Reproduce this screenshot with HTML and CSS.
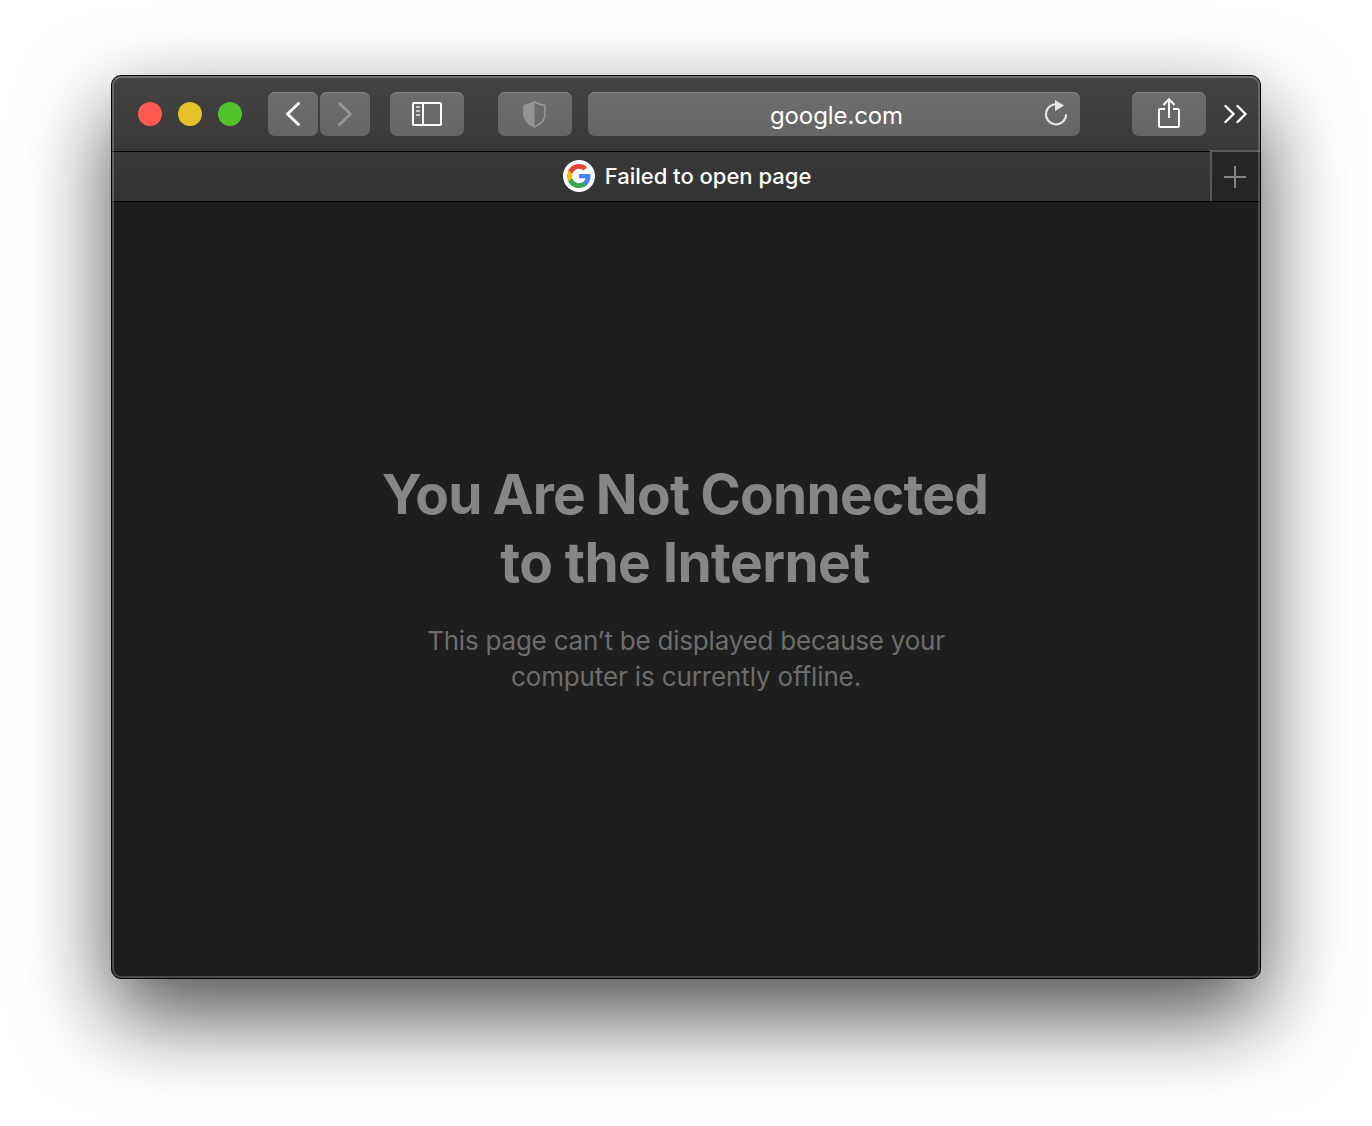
FILE: index.html
```html
<!DOCTYPE html>
<html lang="en">
<head>
<meta charset="utf-8">
<title>Failed to open page</title>
<link rel="stylesheet" href="styles.css">
</head>
<body>
<main class="window">
  <header class="toolbar">
    <div class="lights"><span class="light close"></span><span class="light minimize"></span><span class="light maximize"></span></div>
    <div class="nav">
      <button class="btn narrow" aria-label="Back"><svg width="50" height="44" viewBox="0 0 50 44"><path d="M30.500 11.500 19.500 22 30.500 32.500" fill="none" stroke="#fff" stroke-width="2.900" stroke-linecap="round" stroke-linejoin="round"/></svg></button>
      <button class="btn narrow" aria-label="Forward"><svg width="50" height="44" viewBox="0 0 50 44"><path d="M19.500 11.500 30.500 22 19.500 32.500" fill="none" stroke="#979797" stroke-width="2.700" stroke-linecap="round" stroke-linejoin="round"/></svg></button>
    </div>
    <button class="btn sidebar" aria-label="Sidebar"><svg width="74" height="44" viewBox="0 0 74 44"><rect x="23" y="11" width="28" height="22" rx="1" fill="none" stroke="#fff" stroke-width="2"/><path d="M33 11V33" stroke="#fff" stroke-width="2"/><path d="M26 15H30M26 19H30M26 23H30" stroke="#c8c8c8" stroke-width="2"/></svg></button>
    <button class="btn shield" aria-label="Privacy report"><svg width="74" height="44" viewBox="0 0 74 44"><path d="M36.500 9.700C33.500 11.700 29.500 12.900 26 13.600V22.500C26 28.500 31 32.500 36.500 35 42 32.500 47 28.500 47 22.500V13.600C43.500 12.900 39.500 11.700 36.500 9.700Z" fill="none" stroke="#949494" stroke-width="1.700" stroke-linejoin="round"/><path d="M36.500 9.700C33.500 11.700 29.500 12.900 26 13.600V22.500C26 28.500 31 32.500 36.500 35Z" fill="#949494"/></svg></button>
    <div class="address"><span class="url">google.com</span><svg class="reload" width="32" height="44" viewBox="0 0 32 44"><path d="M18.500 12.500A10.100 10.100 0 1 0 26.100 22.300" fill="none" stroke="#e6e6e6" stroke-width="2"/><path d="M15 8V19.200L24 13.500Z" fill="#e6e6e6"/></svg></div>
    <button class="btn share" aria-label="Share"><svg width="74" height="44" viewBox="0 0 74 44"><path d="M33 17H28Q27 17 27 18V34Q27 35 28 35H46Q47 35 47 34V18Q47 17 46 17H41M37 26V8M31.500 13 37 7.200 42.500 13" fill="none" stroke="#fff" stroke-width="1.900"/></svg></button>
    <svg class="more" width="24" height="20" viewBox="0 0 24 20"><path d="M1.500 2 9.500 10 1.500 18M13.500 2 21.500 10 13.500 18" fill="none" stroke="#fff" stroke-width="2.300" stroke-linecap="round" stroke-linejoin="miter"/></svg>
  </header>
  <nav class="tabs">
    <div class="tab">
      <svg class="favicon" width="32" height="32" viewBox="0 0 32 32"><circle cx="16" cy="16" r="16" fill="#fff"/><g transform="translate(4 4)"><path d="M23.520 12.270c0-.820-.070-1.600-.210-2.350H12v4.450h6.460c-.280 1.480-1.130 2.740-2.400 3.580v2.970h3.860c2.260-2.090 3.600-5.160 3.600-8.650z" fill="#4285f4"/><path d="M12 24c3.240 0 5.950-1.080 7.930-2.910l-3.860-3c-1.080.720-2.450 1.160-4.070 1.160-3.130 0-5.780-2.110-6.730-4.960H1.290v3.090C3.260 21.300 7.310 24 12 24z" fill="#34a853"/><path d="M5.270 14.290A7.200 7.200 0 0 1 5.270 9.710V6.620H1.290a12 12 0 0 0 0 10.760z" fill="#fbbc05"/><path d="M12 4.750c1.770 0 3.350.610 4.600 1.800l3.420-3.420C17.950 1.190 15.240 0 12 0 7.310 0 3.260 2.700 1.290 6.620l3.980 3.090C6.220 6.860 8.870 4.750 12 4.750z" fill="#ea4335"/></g></svg>
      <span class="tab-title">Failed to open page</span>
    </div>
    <button class="new-tab" aria-label="New tab"><svg width="22" height="22" viewBox="0 0 22 22"><path d="M11 0V22M0 11H22" stroke="#858585" stroke-width="2"/></svg></button>
  </nav>
  <section class="page">
    <h1 class="headline">You Are Not Connected<br><span class="headline-end">to the Internet</span></h1>
    <p class="message">This page can’t be displayed because your<br><span class="message-end">computer is currently offline.</span></p>
  </section>
</main>
</body>
</html>
```
FILE: styles.css
```css
* { box-sizing: border-box; }
body {
  margin: 0;
  height: 1126px;
  padding: 75px 0 0 111px;
  overflow: hidden;
  background: #fff;
  font-family: Inter, "Liberation Sans", sans-serif;
}
svg { display: block; flex: none; }
button { margin: 0; padding: 0; border: 0; font: inherit; color: inherit; }
.window {
  position: relative;
  display: flex;
  flex-direction: column;
  width: 1150px;
  height: 904px;
  border: 1px solid #000;
  border-radius: 10px;
  background: #1e1e1e;
  box-shadow: 0 36px 88px rgba(0, 0, 0, .7);
}
/* light rim drawn over the window's content */
.window::after {
  content: "";
  position: absolute;
  inset: 0;
  border: 2px solid rgba(255, 255, 255, .2);
  border-top-color: rgba(255, 255, 255, .26);
  border-radius: 9px;
  pointer-events: none;
}
.toolbar {
  display: flex;
  align-items: flex-start;
  height: 76px;
  padding: 16px 12px 0 26px;
  border-bottom: 1px solid #000;
  border-radius: 9px 9px 0 0;
  background: linear-gradient(#434343, #393939);
}
.lights { display: flex; gap: 16px; padding-top: 10px; margin-right: 26px; }
.light { width: 24px; height: 24px; border-radius: 50%; }
.close { background: #ff5b52; }
.minimize { background: #e6c029; }
.maximize { background: #53c32b; }
.nav { display: flex; gap: 2px; margin-right: 20px; }
.btn, .address {
  flex: none;
  height: 44px;
  border-radius: 7px;
  background: linear-gradient(#6d6d6d, #666);
  box-shadow: inset 0 1px #858585;
}
.btn { width: 74px; }
.btn.narrow { width: 50px; }
.sidebar { margin-right: 34px; }
.shield { margin-right: 16px; }
.address {
  display: flex;
  align-items: center;
  width: 492px;
  margin-right: 52px;
  padding-right: 8px;
}
.url { flex: 1; padding: 3px 0 0 45px; text-align: center; color: #fff; font-size: 24px; line-height: 30px; letter-spacing: -.1px; }
.share { margin-right: 18px; }
.more { margin-top: 12px; }
.tabs { display: flex; height: 50px; border-bottom: 1px solid #000; background: linear-gradient(#393939, #333); }
.tab { flex: 1; display: flex; align-items: center; justify-content: center; gap: 10px; padding: 0 0 1px 52px; }
.tab-title { color: #fff; font-size: 22px; font-weight: 500; line-height: 30px; }
.new-tab {
  display: flex;
  align-items: center;
  justify-content: center;
  width: 50px;
  margin-top: -2px;
  padding-right: 2px;
  border-left: 2px solid #5a5a5a;
  border-top: 2px solid #5a5a5a;
  background: #262626;
}
.page { flex: 1; text-align: center; color: #868686; }
.headline { margin: 258px 0 0; padding-right: 2px; font-size: 55px; line-height: 68px; font-weight: 700; letter-spacing: -.78px; word-spacing: -1.4px; }
.headline-end { letter-spacing: -.62px; word-spacing: 0; }
.message { margin: 27px 0 0; color: #6d6d6d; font-size: 26px; line-height: 36px; letter-spacing: -.22px; }
.message-end { letter-spacing: -.13px; }
```
